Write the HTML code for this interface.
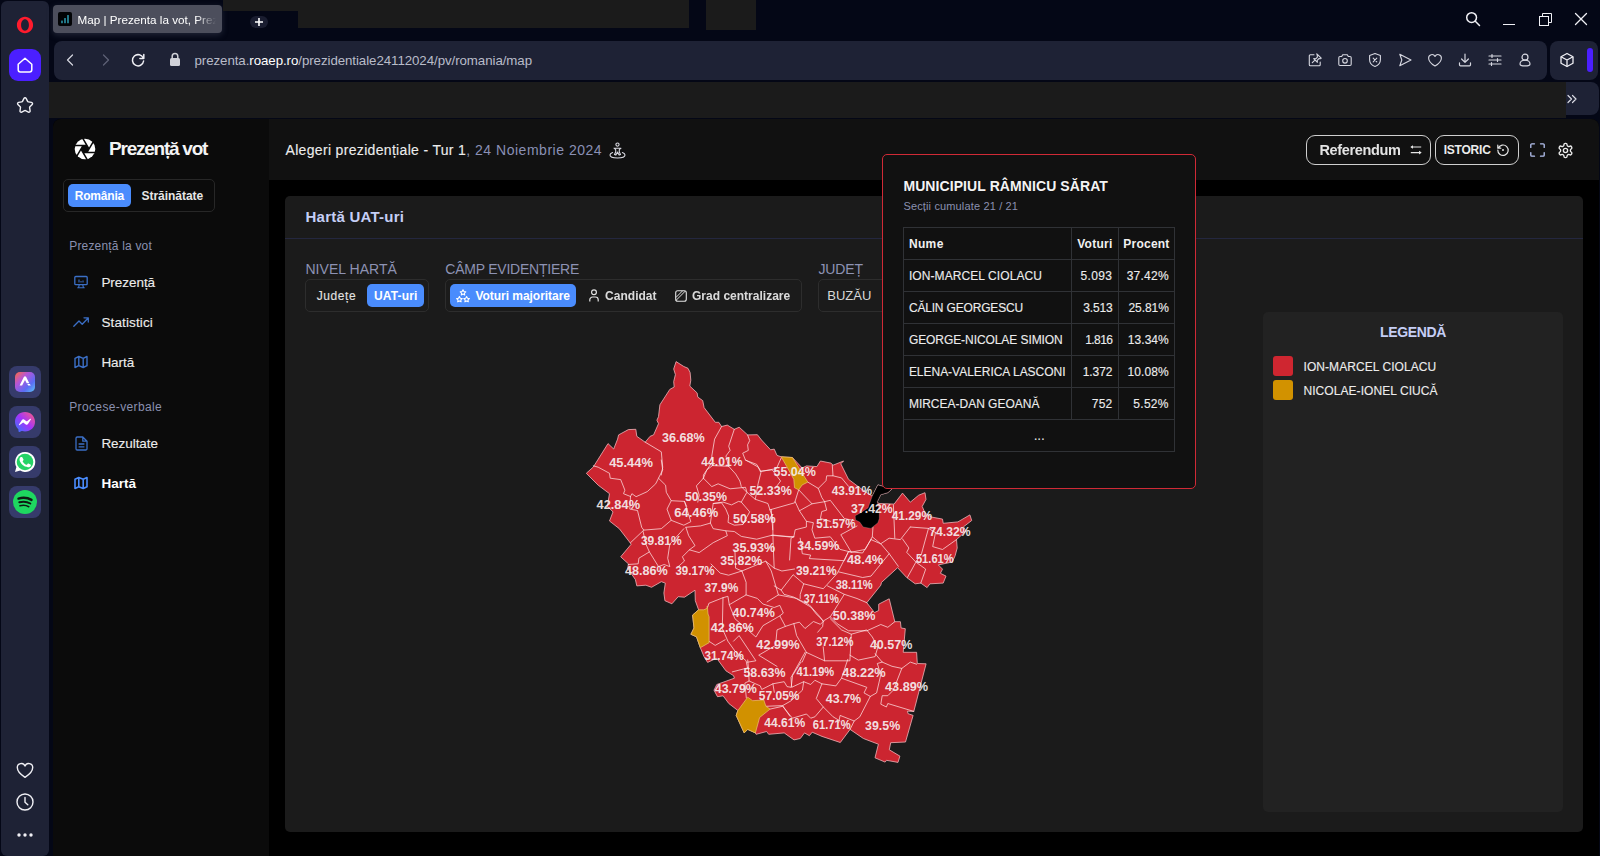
<!DOCTYPE html>
<html lang="ro">
<head>
<meta charset="utf-8">
<title>Map | Prezenta la vot</title>
<style>
*{box-sizing:border-box;margin:0;padding:0}
html,body{width:1600px;height:856px;overflow:hidden;background:#040716}
body{position:relative;font-family:"Liberation Sans",sans-serif;color:#e8e8e8;-webkit-font-smoothing:antialiased}
.abs{position:absolute}
.t{position:absolute;white-space:nowrap;line-height:1}
svg{position:absolute;overflow:visible}
/* browser chrome */
#osb{left:1px;top:1px;width:48px;height:855px;background:#1e2235;border-radius:6px}
#tab{left:53px;top:5px;width:169px;height:28px;background:#4c4e5c;border-radius:4px;box-shadow:0 2px 6px rgba(90,95,120,.35)}
.red{background:#1b1b1b}
#addr{left:54px;top:41px;width:1493px;height:39px;background:#1e2235;border-radius:8px}
#addr2{left:1550px;top:41px;width:48px;height:39px;background:#1e2235;border-radius:8px}
#bm{left:49px;top:82px;width:1550px;height:33px;background:#1e2235;border-radius:0 8px 8px 0}
.tile{left:9px;width:32px;height:32px;border-radius:8px;background:#363b6b}
/* page */
#page{left:53px;top:119px;width:1546px;height:737px;background:#000;border-radius:8px 8px 0 0;overflow:hidden}
#side{left:0;top:0;width:216px;height:737px;background:#0b0b0b}
#head{left:216px;top:0;width:1330px;height:61px;background:#111}
#panel{left:232px;top:77px;width:1298px;height:636px;background:#1b1b1b;border-radius:5px}
</style>
</head>
<body>
<!-- ===== Opera left sidebar ===== -->
<div class="abs" id="osb"></div>

<!-- opera sidebar icons -->
<svg style="left:16px;top:16px" width="18" height="18" viewBox="0 0 18 18"><path fill="#ff1b2d" fill-rule="evenodd" d="M9 .8C4.5.8.9 4.5.9 9s3.600 8.200 8.100 8.200S17.100 13.500 17.100 9 13.500.8 9 .8Zm0 2.500c-2.300 0-3.900 2.600-3.900 5.700s1.600 5.700 3.900 5.700 3.900-2.600 3.900-5.700S11.300 3.300 9 3.300Z"/><path fill="#1e2235" opacity=".0" d="M0 0"/></svg>
<div class="abs" style="left:9px;top:49px;width:32px;height:32px;border-radius:9px;background:#4b1fff"></div>
<svg style="left:16px;top:56px" width="18" height="18" viewBox="0 0 18 18" fill="none" stroke="#fff" stroke-width="1.5" stroke-linejoin="round"><path d="M2.200 8.300 9 2.200l6.800 6.100v5.400a2.200 2.200 0 0 1-2.200 2.200H4.400a2.200 2.200 0 0 1-2.200-2.200Z"/></svg>
<svg style="left:16px;top:96px" width="18" height="18" viewBox="0 0 18 18" fill="none" stroke="#f0f0f5" stroke-width="1.400" stroke-linejoin="round"><path d="M9 1.700c.5 0 .9.300 1.100.700l1.500 3c.1.300.4.500.7.500l3.200.5c1 .2 1.400 1.300.7 2l-2.300 2.300c-.2.200-.3.500-.3.800l.5 3.300c.2 1-.8 1.700-1.700 1.300l-2.900-1.500a1 1 0 0 0-.9 0l-2.900 1.500c-.9.400-1.900-.3-1.700-1.300l.5-3.300c0-.3-.1-.6-.3-.8L1.900 8.400c-.7-.7-.3-1.800.7-2l3.200-.5c.3 0 .6-.2.700-.5l1.500-3c.2-.4.600-.7 1-.7Z"/></svg>
<div class="abs tile" style="top:366px"></div>
<div class="abs tile" style="top:406px"></div>
<div class="abs tile" style="top:446px"></div>
<div class="abs tile" style="top:486px"></div>
<!-- aria tile -->
<svg style="left:15px;top:372px" width="20" height="20" viewBox="0 0 20 20"><defs><linearGradient id="ga" x1="0" y1="0" x2="1" y2="1"><stop offset="0" stop-color="#ff6a3d"/><stop offset=".35" stop-color="#b455d8"/><stop offset=".7" stop-color="#5b6cf5"/><stop offset="1" stop-color="#5cc6f5"/></linearGradient></defs><rect width="20" height="20" rx="5" fill="url(#ga)"/><path d="M9.100 4.600 4.600 13.600h2.500L10 7.900l1.700 3.300h2.600L10.900 4.600ZM12.300 11.900l.9 1.700h2.600l-.9-1.700Z" fill="#fff"/></svg>
<!-- messenger tile -->
<svg style="left:15px;top:412px" width="20" height="20" viewBox="0 0 20 20"><defs><linearGradient id="gm" x1="0" y1="1" x2="1" y2="0"><stop offset="0" stop-color="#2f7bff"/><stop offset=".5" stop-color="#a334fa"/><stop offset="1" stop-color="#ff5f7a"/></linearGradient></defs><path fill="url(#gm)" d="M10 0C4.400 0 0 4.100 0 9.700c0 2.900 1.200 5.400 3.100 7.200.2.100.3.400.3.600l.1 1.800c0 .6.600 1 1.100.7l2-.9c.2-.1.400-.1.500 0 .9.300 1.900.4 2.900.4 5.600 0 10-4.100 10-9.700S15.600 0 10 0Z"/><path fill="#fff" d="m4 12.500 2.900-4.600c.5-.8 1.500-.9 2.200-.4l2.300 1.700c.2.200.5.200.7 0l3.100-2.400c.4-.3 1 .2.700.6L13 12c-.5.800-1.500.9-2.200.4L8.500 10.700a.6.600 0 0 0-.7 0l-3.100 2.400c-.4.300-1-.2-.7-.6Z"/></svg>
<!-- whatsapp tile -->
<svg style="left:15px;top:452px" width="20" height="20" viewBox="0 0 20 20"><path fill="#fff" d="M10 0a10 10 0 0 0-8.600 15L0 20l5.200-1.400A10 10 0 1 0 10 0Z"/><circle cx="10" cy="10" r="8.300" fill="#25d366"/><path fill="#fff" d="M7.300 5.300c-.2-.4-.4-.4-.6-.4h-.5c-.2 0-.5.100-.7.300-.3.300-1 .9-1 2.300s1 2.700 1.100 2.900c.1.200 2 3.100 4.800 4.200 2.400.9 2.900.7 3.400.7s1.700-.7 1.900-1.300c.2-.7.200-1.200.2-1.300-.1-.1-.3-.2-.5-.3l-1.900-.9c-.300-.1-.5-.1-.6.100l-.9 1.100c-.2.200-.3.200-.6.100-.3-.2-1.200-.500-2.200-1.400-.8-.7-1.400-1.600-1.500-1.900-.2-.3 0-.4.100-.6l.4-.5c.2-.2.200-.3.300-.5.100-.2 0-.4 0-.5Z"/></svg>
<!-- spotify tile -->
<svg style="left:13px;top:490px" width="24" height="24" viewBox="0 0 24 24"><circle cx="12" cy="12" r="12" fill="#1ed760"/><g fill="none" stroke="#0e1a12" stroke-linecap="round"><path stroke-width="2.400" d="M5.500 8.600c4.300-1.300 9.200-.9 13 1.300"/><path stroke-width="2" d="M6.300 12.300c3.700-1.100 7.800-.7 11 1.200"/><path stroke-width="1.600" d="M7 15.700c3-.8 6.200-.6 8.800 1"/></g></svg>
<!-- bottom icons -->
<svg style="left:15.500px;top:762px" width="18" height="17" viewBox="0 0 18 17" fill="none" stroke="#f0f0f5" stroke-width="1.400" stroke-linejoin="round"><path d="M9 15.300S1.300 10.600 1.300 5.600A4 4 0 0 1 9 4a4 4 0 0 1 7.700 1.600c0 5-7.700 9.700-7.700 9.700Z"/></svg>
<svg style="left:15.500px;top:793px" width="18" height="18" viewBox="0 0 18 18" fill="none" stroke="#f0f0f5" stroke-width="1.400" stroke-linecap="round"><circle cx="9" cy="9" r="8"/><path d="M9 4.500V9.300l2.800 2.500"/></svg>
<svg style="left:14.500px;top:832px" width="20" height="6" viewBox="0 0 20 6" fill="#f0f0f5"><circle cx="4" cy="3" r="1.700"/><circle cx="10" cy="3" r="1.700"/><circle cx="16" cy="3" r="1.700"/></svg>
<!-- ===== tab strip ===== -->
<div class="abs" id="tab"></div>
<div class="abs red" style="left:223px;top:0;width:466px;height:11px"></div>
<div class="abs red" style="left:298px;top:0;width:391px;height:28px"></div>
<div class="abs red" style="left:706px;top:0;width:50px;height:30px"></div>

<!-- tab content -->
<div class="abs" style="left:58px;top:12px;width:14px;height:14px;background:#020305;border-radius:2px"></div>
<svg style="left:58px;top:12px" width="14" height="14" viewBox="0 0 14 14" fill="#2a95a8"><rect x="3.200" y="8.400" width="1.600" height="2.800" rx=".5"/><rect x="6.200" y="6" width="1.600" height="5.200" rx=".5"/><rect x="9.200" y="3" width="1.600" height="8.200" rx=".5"/></svg>
<div class="t" id="t_tab" style="left:77.500px;top:11.500px;width:140px;overflow:hidden;font-size:11.700px;letter-spacing:0;color:#fff;height:16px;line-height:15px;-webkit-mask-image:linear-gradient(90deg,#000 118px,transparent 138px);mask-image:linear-gradient(90deg,#000 118px,transparent 138px)">Map | Prezenta la vot, Prezenta</div>
<div class="abs" style="left:250px;top:16px;width:18px;height:12px;border-radius:6px;background:#1a1d30"></div>
<svg style="left:254px;top:17px" width="10" height="10" viewBox="0 0 10 10" stroke="#fff" stroke-width="1.600" fill="none"><path d="M5 1v8M1 5h8"/></svg>
<!-- window controls -->
<svg style="left:1465px;top:11px" width="16" height="16" viewBox="0 0 16 16" fill="none" stroke="#f0f0f5" stroke-width="1.500" stroke-linecap="round"><circle cx="6.600" cy="6.600" r="4.900"/><path d="m10.300 10.300 4.200 4.200"/></svg>
<div class="abs" style="left:1503px;top:24px;width:12px;height:1px;background:#f0f0f5"></div>
<svg style="left:1538.500px;top:12.500px" width="13" height="13" viewBox="0 0 13 13" fill="none" stroke="#f0f0f5" stroke-width="1"><path d="M3.500 3.500V.5h9v9h-3"/><rect x=".5" y="3.500" width="9" height="9"/></svg>
<svg style="left:1574px;top:12px" width="14" height="14" viewBox="0 0 14 14" fill="none" stroke="#f0f0f5" stroke-width="1.300" stroke-linecap="round"><path d="m1.500 1.500 11 11m0-11-11 11"/></svg>
<!-- ===== address bar ===== -->
<div class="abs" id="addr"></div>
<div class="abs" id="addr2"></div>
<div class="abs" id="bm"></div>
<div class="abs red" style="left:49px;top:82px;width:1517px;height:36px"></div>

<!-- nav icons -->
<svg style="left:63px;top:53px" width="14" height="14" viewBox="0 0 14 14" fill="none" stroke="#d6d7e0" stroke-width="1.200" stroke-linecap="round" stroke-linejoin="round"><path d="M9.500 2 4.500 7l5 5"/></svg>
<svg style="left:99px;top:53px" width="14" height="14" viewBox="0 0 14 14" fill="none" stroke="#5d6075" stroke-width="1.300" stroke-linecap="round" stroke-linejoin="round"><path d="m4.500 2 5 5-5 5"/></svg>
<svg style="left:130px;top:52px" width="16" height="16" viewBox="0 0 16 16" fill="none" stroke="#f0f0f5" stroke-width="1.500" stroke-linecap="round" stroke-linejoin="round"><path d="M13.300 6.300A5.600 5.600 0 1 0 13.600 9"/><path d="M13.800 2.600v3.900H9.900"/></svg>
<svg style="left:169px;top:52px" width="12" height="15" viewBox="0 0 12 15"><rect x="1" y="6" width="10" height="8" rx="1.500" fill="#d0d1d8"/><path d="M3.200 6.500V4.300a2.800 2.800 0 0 1 5.600 0v2.200" fill="none" stroke="#d0d1d8" stroke-width="1.500"/></svg>
<div class="t" id="t_url" style="left:194.500px;top:53px;font-size:13.300px;line-height:16px;color:#b9bcc9;letter-spacing:-.07px">prezenta.<span style="color:#fff">roaep.ro</span>/prezidentiale24112024/pv/romania/map</div>
<!-- address right icons -->

<svg style="left:1307px;top:52px" width="16" height="16" viewBox="0 0 16 16" fill="none" stroke="#d6d7e0" stroke-width="1.100" stroke-linejoin="round" stroke-linecap="round"><path d="M7 2.800H3.300a1 1 0 0 0-1 1v8.900a1 1 0 0 0 1 1h8.900a1 1 0 0 0 1-1V10"/><path d="m9.800 1.800 4.400 4.400-.9.500-1.400-.1-1.700 1.700.2 2-3.700-3.700 2 .2 1.700-1.700-.1-1.400ZM7.700 8.300 5.300 10.700"/></svg>
<svg style="left:1337px;top:52px" width="16" height="16" viewBox="0 0 16 16" fill="none" stroke="#d6d7e0" stroke-width="1.100" stroke-linejoin="round"><path d="M1.800 5.700a1.200 1.200 0 0 1 1.200-1.200h1.700l1-1.700h4.600l1 1.700H13a1.200 1.200 0 0 1 1.200 1.200v6.600a1.200 1.200 0 0 1-1.200 1.200H3a1.200 1.200 0 0 1-1.200-1.200Z"/><circle cx="8" cy="8.800" r="2.300"/></svg>
<svg style="left:1367px;top:52px" width="16" height="16" viewBox="0 0 16 16" fill="none" stroke="#d6d7e0" stroke-width="1.100" stroke-linejoin="round" stroke-linecap="round"><path d="M8 1.600 2.600 3.400v4.400c0 3.400 2.300 5.600 5.400 6.700 3.100-1.100 5.400-3.300 5.400-6.700V3.400Z"/><path d="m6.200 6.200 3.600 3.600m0-3.600L6.200 9.800"/></svg>
<svg style="left:1397px;top:52px" width="16" height="16" viewBox="0 0 16 16" fill="none" stroke="#d6d7e0" stroke-width="1.100" stroke-linejoin="round"><path d="M2.800 2.300 14 8 2.800 13.700 4.800 8Z"/></svg>
<svg style="left:1427px;top:52px" width="16" height="16" viewBox="0 0 16 16" fill="none" stroke="#d6d7e0" stroke-width="1.100" stroke-linejoin="round"><path d="M8 14S1.600 10.200 1.600 5.900A3.400 3.400 0 0 1 8 4.400a3.400 3.400 0 0 1 6.400 1.500C14.400 10.200 8 14 8 14Z"/></svg>
<svg style="left:1457px;top:52px" width="16" height="16" viewBox="0 0 16 16" fill="none" stroke="#d6d7e0" stroke-width="1.200" stroke-linejoin="round" stroke-linecap="round"><path d="M8 2v8.200M4.600 7 8 10.400 11.400 7M2.500 10.800v2a1 1 0 0 0 1 1h9a1 1 0 0 0 1-1v-2"/></svg>
<svg style="left:1487px;top:52px" width="16" height="16" viewBox="0 0 16 16" fill="none" stroke="#d6d7e0" stroke-width="1.200" stroke-linecap="round"><path d="M2 4h12M2 8h12M2 12h12M5 2.500v3M10.500 6.500v3M4.500 10.500v3"/></svg>
<svg style="left:1517px;top:52px" width="16" height="16" viewBox="0 0 16 16" fill="none" stroke="#d6d7e0" stroke-width="1.200"><circle cx="8" cy="5.200" r="3"/><path d="M8 8.200c-3 0-5 1.700-5 3.700 0 1.300 1.800 2 5 2s5-.7 5-2c0-2-2-3.700-5-3.700Z"/></svg>
<svg style="left:1559px;top:52px" width="16" height="16" viewBox="0 0 16 16" fill="none" stroke="#f0f0f5" stroke-width="1.300" stroke-linejoin="round"><path d="M8 1.500 14 4.800v6.400L8 14.500 2 11.200V4.800Z"/><path d="M2 4.800 8 8l6-3.200M8 8v6.500"/></svg>
<div class="abs" style="left:1587px;top:48px;width:6px;height:24px;border-radius:3px;background:#4b1fff"></div>
<svg style="left:1567px;top:93.500px" width="10" height="10" viewBox="0 0 10 10" fill="none" stroke="#d8d9e2" stroke-width="1.200" stroke-linecap="round" stroke-linejoin="round"><path d="m1 1.500 3.500 3.500L1 8.500M5.500 1.500 9 5 5.500 8.500"/></svg>
<!-- ===== page ===== -->
<div class="abs" id="page">
  <div class="abs" id="side"></div>
  <div class="abs" id="head"></div>
  <div class="abs" id="panel"></div>
</div>
<!-- app sidebar shapes -->
<svg style="left:73px;top:137px" width="24" height="24" viewBox="0 0 24 24"><circle cx="12" cy="12" r="10.300" fill="#fff"/><polygon points="16,12 14,15.460 10,15.460 8,12 10,8.540 14,8.540" fill="#0b0b0b"/><path d="M14 15.460L20.170 4.780M10 15.460L22.330 15.460M8 12L14.170 22.680M10 8.540L3.830 19.220M14 8.540L1.670 8.540M16 12L9.830 1.320" stroke="#0b0b0b" stroke-width="1.500" fill="none"/></svg>
<div class="abs" style="left:63px;top:179px;width:152px;height:33px;border:1px solid #272727;border-radius:5px"></div>
<div class="abs" style="left:68px;top:184px;width:63px;height:23px;border-radius:5px;background:#4a8cfd"></div>
<!-- nav icons -->
<svg style="left:74px;top:275px" width="14" height="14" viewBox="0 0 14 14" fill="none" stroke="#3b6fc6" stroke-width="1.300" stroke-linejoin="round"><rect x=".8" y="1.500" width="12.400" height="8.200" rx="1"/><path d="M3.300 12.800h7.400M5.200 9.900l-.6 2.800M8.800 9.900l.6 2.800M5 7.500V4.500M7 7.500V6M9 7.500V5.500" stroke-width="1.100"/></svg>
<svg style="left:73px;top:315px" width="16" height="14" viewBox="0 0 16 14" fill="none" stroke="#3b6fc6" stroke-width="1.300" stroke-linejoin="round" stroke-linecap="round"><path d="M.8 11.200 6 6l3.200 3.200 6-6.200M11 2.800h4.300v4.300"/></svg>
<svg style="left:74px;top:355px" width="14" height="14" viewBox="0 0 14 14" fill="none" stroke="#3b6fc6" stroke-width="1.400" stroke-linejoin="round"><path d="M1 3.300 4.800 1.500l4.400 1.800L13 1.500v9.200l-3.800 1.800-4.400-1.800L1 12.500ZM4.800 1.500v9.200M9.200 3.300v9.200"/></svg>
<svg style="left:75px;top:436px" width="13" height="15" viewBox="0 0 13 15" fill="none" stroke="#3b6fc6" stroke-width="1.300" stroke-linejoin="round"><path d="M1 2.200A1.200 1.200 0 0 1 2.200 1h5.600L12 5.200v7.600a1.200 1.200 0 0 1-1.200 1.200H2.200A1.200 1.200 0 0 1 1 12.800ZM7.800 1v4.200H12M3.600 8h5.800M3.600 10.800h5.800" /></svg>
<svg style="left:74px;top:476px" width="14" height="14" viewBox="0 0 14 14" fill="none" stroke="#4a8cfd" stroke-width="1.600" stroke-linejoin="round"><path d="M1 3.300 4.800 1.500l4.400 1.800L13 1.500v9.200l-3.800 1.800-4.400-1.800L1 12.500ZM4.800 1.500v9.200M9.200 3.300v9.200"/></svg>
<!-- header icons -->
<svg style="left:609px;top:142px" width="17" height="17" viewBox="0 0 17 17" fill="none" stroke="#d8d8e0" stroke-width="1.100" stroke-linejoin="round" stroke-linecap="round"><circle cx="8.500" cy="2.600" r="1.600"/><path d="M5 6.200h7l-1.700 1.500v2.200l1.200 2.600-1.400.6-1.600-3-1.600 3-1.400-.6 1.200-2.600V7.700Z"/><path d="M3.600 10.500C2 11.100 1 12 1 13c0 1.700 3.400 3 7.500 3s7.500-1.300 7.500-3c0-1-1-1.900-2.600-2.500"/></svg>
<div class="abs" style="left:1306px;top:135px;width:125px;height:30px;border:1px solid #cfcfcf;border-radius:9px"></div>
<div class="abs" style="left:1435px;top:135px;width:84px;height:30px;border:1px solid #cfcfcf;border-radius:9px"></div>
<svg style="left:1409.500px;top:144px" width="12" height="12" viewBox="0 0 12 12" fill="#e6e6e6" stroke="#e6e6e6" stroke-width="1.100"><path d="M1.500 3H11.200M10.500 8.600H.8" fill="none"/><path d="M.3 3 3 1.200V4.800ZM11.700 8.600 9 6.800v3.600Z" stroke="none"/></svg>
<svg style="left:1497px;top:144px" width="12" height="12" viewBox="0 0 12 12" fill="none" stroke="#e6e6e6" stroke-width="1.200" stroke-linecap="round" stroke-linejoin="round"><path d="M1.200 4.200A5.200 5.200 0 1 1 .8 6M.8 1.200v3h3"/><circle cx="6" cy="6" r="1" fill="#e6e6e6" stroke="none"/></svg>
<svg style="left:1530px;top:143px" width="15" height="14" viewBox="0 0 15 14" fill="none" stroke="#b6c3f2" stroke-width="1.300" stroke-linecap="round" stroke-linejoin="round"><path d="M.8 4.400V1.800a1 1 0 0 1 1-1h2.700M10.500.8h2.700a1 1 0 0 1 1 1v2.600M14.200 9.600v2.600a1 1 0 0 1-1 1h-2.700M4.500 13.200H1.800a1 1 0 0 1-1-1V9.600"/></svg>
<svg style="left:1556.500px;top:141.500px" width="17" height="17" viewBox="0 0 24 24" fill="none" stroke="#ececec" stroke-width="1.900" stroke-linecap="round" stroke-linejoin="round"><path d="M12.220 2h-.44a2 2 0 0 0-2 2v.18a2 2 0 0 1-1 1.730l-.43.250a2 2 0 0 1-2 0l-.15-.08a2 2 0 0 0-2.730.73l-.22.380a2 2 0 0 0 .73 2.730l.15.100a2 2 0 0 1 1 1.720v.51a2 2 0 0 1-1 1.740l-.15.090a2 2 0 0 0-.73 2.730l.22.380a2 2 0 0 0 2.730.73l.15-.08a2 2 0 0 1 2 0l.43.250a2 2 0 0 1 1 1.730V20a2 2 0 0 0 2 2h.44a2 2 0 0 0 2-2v-.18a2 2 0 0 1 1-1.730l.43-.250a2 2 0 0 1 2 0l.15.080a2 2 0 0 0 2.730-.73l.22-.39a2 2 0 0 0-.73-2.730l-.15-.08a2 2 0 0 1-1-1.740v-.5a2 2 0 0 1 1-1.740l.15-.09a2 2 0 0 0 .73-2.730l-.22-.38a2 2 0 0 0-2.730-.73l-.15.080a2 2 0 0 1-2 0l-.43-.250a2 2 0 0 1-1-1.730V4a2 2 0 0 0-2-2z"/><circle cx="12" cy="12" r="3"/></svg>
<!-- panel -->
<div class="abs" style="left:285px;top:238px;width:1298px;height:1px;background:#24273f"></div>
<div class="abs" style="left:305px;top:279px;width:124px;height:33px;border:1px solid #2d2d2d;border-radius:5px"></div>
<div class="abs" style="left:367px;top:284px;width:57px;height:23px;border-radius:5px;background:#4a8cfd"></div>
<div class="abs" style="left:445px;top:279px;width:357px;height:33px;border:1px solid #2d2d2d;border-radius:5px"></div>
<div class="abs" style="left:450px;top:284px;width:126px;height:23px;border-radius:5px;background:#4a8cfd"></div>
<div class="abs" style="left:818px;top:279px;width:200px;height:33px;border:1px solid #2d2d2d;border-radius:5px"></div>
<svg style="left:456px;top:289px" width="14" height="14" viewBox="0 0 14 14" fill="none" stroke="#fff" stroke-width="1.100" stroke-linejoin="round"><path d="m7 .8.900 1.700 1.900.3-1.400 1.300.3 1.900L7 5.100l-1.700.9.300-1.900L4.200 2.800l1.900-.3ZM3.400 7.600l.9 1.700 1.900.3-1.400 1.300.3 1.900-1.700-.9-1.700.9.300-1.900L.6 9.600l1.900-.3ZM10.600 7.600l.9 1.700 1.900.3-1.400 1.300.3 1.900-1.700-.9-1.700.9.300-1.900-1.400-1.300 1.900-.3Z"/></svg>
<svg style="left:589px;top:289px" width="10" height="13" viewBox="0 0 10 13" fill="none" stroke="#e2e2e2" stroke-width="1.200"><circle cx="5" cy="3.200" r="2.400"/><path d="M.8 12.400V10.800A2.800 2.800 0 0 1 3.600 8h2.800a2.800 2.800 0 0 1 2.800 2.800v1.600"/></svg>
<svg style="left:675px;top:290px" width="12" height="12" viewBox="0 0 12 12" fill="none" stroke="#e2e2e2" stroke-width="1.100" stroke-linejoin="round"><rect x=".7" y=".7" width="10.600" height="10.600" rx="2"/><path d="M.9 7.500 7.500.9M.9 10.500 10.500.9" stroke-width="1"/></svg>
<!-- legend -->
<div class="abs" style="left:1263px;top:312px;width:300px;height:500px;background:#222;border-radius:5px"></div>
<div class="abs" style="left:1273px;top:356px;width:20px;height:20px;border-radius:3px;background:#cf2630"></div>
<div class="abs" style="left:1273px;top:380px;width:20px;height:20px;border-radius:3px;background:#d29200"></div>

<div class="t" id="t_logo" style="left:109.1px;top:139.0px;font-size:19px;color:#f4f4f4;letter-spacing:-1.249px;font-weight:700">Prezență vot</div>
<div class="t" id="t_ro" style="left:74.8px;top:190.3px;font-size:12px;color:#ffffff;letter-spacing:-0.212px;font-weight:700">România</div>
<div class="t" id="t_str" style="left:141.5px;top:190.3px;font-size:12px;color:#e6e6e6;letter-spacing:-0.030px;font-weight:700">Străinătate</div>
<div class="t" id="t_s1" style="left:69.2px;top:239.7px;font-size:12px;color:#8a90b0;letter-spacing:0.184px">Prezență la vot</div>
<div class="t" id="t_n1" style="left:101.4px;top:275.7px;font-size:13.5px;color:#ececec;letter-spacing:-0.043px;-webkit-text-stroke:.12px #ececec">Prezență</div>
<div class="t" id="t_n2" style="left:101.4px;top:315.8px;font-size:13.5px;color:#ececec;letter-spacing:0.133px;-webkit-text-stroke:.12px #ececec">Statistici</div>
<div class="t" id="t_n3" style="left:101.4px;top:355.9px;font-size:13.5px;color:#ececec;letter-spacing:-0.023px;-webkit-text-stroke:.12px #ececec">Hartă</div>
<div class="t" id="t_s2" style="left:69.2px;top:400.8px;font-size:12px;color:#8a90b0;letter-spacing:0.368px">Procese-verbale</div>
<div class="t" id="t_n4" style="left:101.4px;top:436.7px;font-size:13.5px;color:#ececec;letter-spacing:-0.050px;-webkit-text-stroke:.12px #ececec">Rezultate</div>
<div class="t" id="t_n5" style="left:101.4px;top:476.5px;font-size:13.5px;color:#ffffff;letter-spacing:0.017px;font-weight:700">Hartă</div>
<div class="t" id="t_h1" style="left:285.5px;top:143.0px;font-size:14px;color:#ececec;letter-spacing:0.327px;-webkit-text-stroke:.12px #ececec">Alegeri prezidențiale - Tur 1</div>
<div class="t" id="t_h2" style="left:466.2px;top:143.0px;font-size:14px;color:#8a90b5;letter-spacing:0.522px">, 24 Noiembrie 2024</div>
<div class="t" id="t_pt" style="left:305.5px;top:209.3px;font-size:15px;color:#c5cef5;letter-spacing:0.240px;font-weight:700">Hartă UAT-uri</div>
<div class="t" id="t_l1" style="left:305.4px;top:262.2px;font-size:14px;color:#8d92b3;letter-spacing:0.052px">NIVEL HARTĂ</div>
<div class="t" id="t_l2" style="left:445.3px;top:262.2px;font-size:14px;color:#8d92b3;letter-spacing:-0.234px">CÂMP EVIDENȚIERE</div>
<div class="t" id="t_l3" style="left:818.5px;top:262.2px;font-size:14px;color:#8d92b3;letter-spacing:-0.165px">JUDEȚ</div>
<div class="t" id="t_b1" style="left:316.8px;top:290.1px;font-size:12px;color:#e2e2e2;letter-spacing:0.561px;-webkit-text-stroke:.12px #e2e2e2">Județe</div>
<div class="t" id="t_b2" style="left:373.9px;top:290.1px;font-size:12px;color:#ffffff;letter-spacing:0.178px;font-weight:700">UAT-uri</div>
<div class="t" id="t_b3" style="left:475.4px;top:290.1px;font-size:12px;color:#ffffff;letter-spacing:-0.032px;font-weight:700">Voturi majoritare</div>
<div class="t" id="t_b4" style="left:605.0px;top:290.1px;font-size:12px;color:#e2e2e2;letter-spacing:0.032px;font-weight:700;opacity:.96">Candidat</div>
<div class="t" id="t_b5" style="left:692.0px;top:290.1px;font-size:12px;color:#e2e2e2;letter-spacing:0.009px;font-weight:700;opacity:.96">Grad centralizare</div>
<div class="t" id="t_b6" style="left:827.3px;top:289.2px;font-size:13px;color:#d8d8d8;letter-spacing:0.008px">BUZĂU</div>
<div class="t" id="t_r1" style="left:1319.5px;top:142.9px;font-size:14.5px;color:#ececec;letter-spacing:-0.361px;font-weight:700;opacity:.96">Referendum</div>
<div class="t" id="t_r2" style="left:1443.7px;top:144.1px;font-size:12px;color:#ececec;letter-spacing:-0.222px;font-weight:700">ISTORIC</div>
<div class="t" id="t_lg" style="left:1380.0px;top:325.2px;font-size:14px;color:#c5cef5;letter-spacing:-0.365px;font-weight:700">LEGENDĂ</div>
<div class="t" id="t_lg1" style="left:1303.5px;top:360.6px;font-size:12px;color:#ececec;letter-spacing:0.062px;-webkit-text-stroke:.12px #ececec">ION-MARCEL CIOLACU</div>
<div class="t" id="t_lg2" style="left:1303.5px;top:384.7px;font-size:12px;color:#ececec;letter-spacing:0.062px;-webkit-text-stroke:.12px #ececec">NICOLAE-IONEL CIUCĂ</div>
<svg style="left:0;top:0" width="1600" height="856" viewBox="0 0 1600 856">
<polygon points="676.1,361.6 683.8,366.5 688.0,368.3 690.1,372.5 690.8,380.2 689.8,386.1 697.1,392.9 697.8,397.1 702.7,400.6 704.1,407.6 715.3,422.3 718.8,422.3 721.6,426.5 727.3,425.1 734.3,429.3 739.2,427.2 747.6,434.9 757.4,434.7 761.5,440.0 770.6,449.8 774.2,449.1 777.0,455.4 781.2,456.8 792.4,457.5 802.2,468.0 806.4,465.9 816.9,466.6 820.4,461.0 830.9,463.1 833.0,465.2 843.6,461.0 840.8,463.8 848.5,479.3 859.7,487.7 870.9,495.4 872.3,496.1 877.9,484.9 892.0,489.1 887.8,492.6 880.7,494.7 877.2,501.7 878.7,503.5 894.1,504.1 902.5,493.1 910.3,502.2 918.7,495.2 925.0,492.7 926.0,499.4 922.2,506.4 925.0,513.0 931.3,517.0 942.5,519.1 943.2,523.3 957.9,521.9 969.9,514.9 971.7,520.5 963.5,526.8 966.0,531.0 956.5,539.6 957.2,548.0 955.1,555.8 952.3,562.0 938.3,564.9 942.5,569.1 940.4,573.3 946.0,576.1 943.2,583.1 929.9,583.8 927.1,587.6 920.8,583.1 915.2,583.8 906.7,577.5 897.6,567.7 881.5,582.4 880.8,585.2 866.8,602.7 874.5,612.6 878.7,610.5 878.7,604.2 889.2,598.8 894.8,621.7 900.4,621.7 901.1,628.0 905.3,628.7 903.2,652.3 916.6,652.3 917.3,663.5 926.1,663.8 913.8,711.4 907.4,711.2 908.1,713.7 913.1,715.4 905.5,742.0 890.7,742.7 889.3,749.8 899.9,756.1 898.0,762.4 886.5,760.3 885.1,762.1 875.0,757.8 878.4,744.2 863.4,738.5 850.1,729.4 840.3,742.5 822.0,736.4 812.2,732.2 809.4,735.7 804.5,732.9 800.3,738.5 794.0,739.9 784.2,732.9 768.7,734.3 766.6,731.5 756.1,734.3 755.4,732.9 747.7,729.4 744.2,732.9 736.2,715.4 737.9,710.5 728.8,703.5 723.1,695.8 717.5,696.7 714.0,690.2 716.8,684.5 734.4,678.2 733.6,675.7 725.9,670.8 716.7,658.2 707.6,662.4 704.1,656.8 700.3,647.7 696.5,636.8 690.9,634.3 694.0,628.0 692.6,615.1 698.6,609.8 695.3,600.7 695.0,590.2 684.5,597.2 678.2,596.7 671.9,603.8 664.9,600.7 663.9,593.0 665.3,583.1 661.3,581.7 651.5,587.3 645.9,585.2 636.8,585.9 635.4,579.6 627.7,568.4 628.4,563.8 620.7,556.8 631.2,544.2 619.3,528.7 609.5,521.0 613.0,511.9 607.3,506.3 609.5,493.7 598.2,485.2 586.3,473.3 593.3,467.0 608.0,443.6 613.7,449.0 617.6,439.1 618.6,434.9 628.4,429.6 635.8,429.3 636.8,436.3 645.2,442.2 650.1,436.3 653.6,434.9 658.5,423.7 656.9,420.2 658.5,416.7 659.9,404.8 669.8,389.4 674.2,387.0 673.7,381.6 675.4,374.6 673.7,369.0" fill="#cc2530" stroke="#efb3b8" stroke-width=".8" stroke-linejoin="round"/>
<g fill="none" stroke="#ffe6e8" stroke-opacity=".72" stroke-width="1" stroke-linejoin="round" stroke-linecap="round">
<polyline points="645.2,442.2 661.3,451.8 662.7,467.2 661.3,475.0"/>
<polyline points="721.6,426.5 714.6,439.1 711.8,456.0 712.5,461.6 703.4,475.0 703.4,478.2"/>
<polyline points="734.3,429.3 728.7,446.2 730.1,450.4 725.9,456.0 727.3,461.6 728.7,466.3"/>
<polyline points="747.6,434.9 749.7,440.6 747.6,444.8 748.3,450.4 742.7,453.2 745.5,460.2 756.7,464.4 760.9,471.4"/>
<polyline points="760.9,471.4 776.4,468.6 781.2,458.0"/>
<polyline points="593.3,465.8 598.2,467.2 609.5,473.3 610.2,478.2 620.7,479.6 624.9,490.2 623.5,493.7 630.5,496.5 631.9,493.7 636.1,496.7 647.3,491.6 655.7,483.8 658.5,478.2 662.7,469.8 661.3,460.0"/>
<polyline points="658.5,478.2 665.6,485.2 666.3,492.3 671.2,500.7 684.5,501.4 686.6,506.3"/>
<polyline points="671.2,500.7 667.0,509.1 671.2,520.3 683.8,525.2 690.8,521.7 684.5,501.4"/>
<polyline points="630.5,496.5 629.8,509.1 637.5,510.5 641.7,527.3 643.8,530.1 661.3,528.7 671.2,520.3"/>
<polyline points="643.8,530.1 630.5,542.7"/>
<polyline points="643.1,531.5 645.9,544.2 649.4,551.9 638.9,558.2 638.2,563.8 628.4,564.5"/>
<polyline points="649.4,551.9 658.5,566.6 664.1,564.5 669.8,566.6 667.7,558.2 669.8,544.2 683.8,528.7"/>
<polyline points="685.9,527.3 688.7,535.7 695.0,545.6 689.4,549.8 682.4,556.8 684.5,561.0 678.2,566.6"/>
<polyline points="685.9,527.3 700.6,525.9 710.4,523.1 713.2,503.5 721.6,502.8 725.8,509.1 728.7,516.1 728.0,522.4 734.3,525.2 742.7,524.5 746.2,520.3"/>
<polyline points="710.4,523.1 713.2,528.7 725.8,530.8 727.3,535.7 713.2,542.7 699.2,552.6 689.4,549.8"/>
<polyline points="725.8,530.8 734.3,531.5 741.3,536.4 756.7,539.2 772.9,535.0 790.4,537.1 793.8,536.8"/>
<polyline points="770.0,509.8 772.9,518.9 772.9,535.0 773.4,550.0 774.2,568.2 781.9,571.0 794.5,569.0"/>
<polyline points="770.0,509.8 794.6,502.8 798.7,489.8"/>
<polyline points="703.4,478.2 696.4,485.9 699.2,495.1 697.8,502.1"/>
<polyline points="703.4,478.2 706.9,469.8 712.5,465.6 728.7,466.3"/>
<polyline points="703.4,478.2 711.8,486.6 718.1,483.8 730.1,488.8 745.5,487.3 746.9,492.3 741.3,502.1 738.5,501.4 731.5,504.9 723.1,502.1 713.2,503.5"/>
<polyline points="728.7,466.3 735.7,474.0 739.9,481.0 741.3,486.6 746.9,492.3 755.3,499.3 767.9,503.5 770.0,509.8"/>
<polyline points="741.3,502.1 749.7,511.9 742.7,524.5"/>
<polyline points="745.5,460.0 758.1,467.0 760.9,472.6 758.1,483.8 755.3,499.3"/>
<polyline points="760.9,471.2 772.2,469.8 780.6,481.0 776.4,486.6"/>
<polyline points="795.2,501.7 799.4,510.8 806.4,521.3 806.4,527.0 795.2,529.8 793.8,536.8 791.0,538.2 789.6,560.0"/>
<polyline points="799.4,510.8 812.0,503.8 824.6,501.7 826.7,510.1 821.8,511.5 820.4,518.5 830.3,521.3"/>
<polyline points="798.7,489.8 812.0,503.8"/>
<polyline points="807.8,482.1 818.3,488.4 826.0,480.7 826.7,475.8 833.0,475.8 832.3,465.2"/>
<polyline points="818.3,488.4 821.8,497.5 824.6,501.7"/>
<polyline points="833.0,475.8 841.5,477.9 848.5,486.3"/>
<polyline points="824.6,501.7 830.3,500.3 844.3,518.5 854.1,520.6"/>
<polyline points="806.4,521.3 813.4,522.7 812.0,529.8 814.8,538.2 830.3,536.8 840.1,549.4 851.3,552.2"/>
<polyline points="857.0,526.0 840.8,534.7 851.3,552.2 865.3,549.4 872.3,536.8 873.0,527.0"/>
<polyline points="872.3,536.8 880.7,543.8 889.1,538.2 900.4,539.6 910.3,527.0"/>
<polyline points="893.4,505.0 894.8,538.2"/>
<polyline points="771.3,509.4 772.7,529.8"/>
<polyline points="793.8,536.8 771.3,535.4"/>
<polyline points="871.0,539.6 880.8,543.8 889.2,553.7 871.0,576.1 862.6,577.5 838.7,571.9"/>
<polyline points="871.0,539.6 862.6,553.0 848.5,551.6 844.3,560.7 809.3,558.6 810.7,555.1 802.3,553.7 800.2,538.2"/>
<polyline points="848.5,551.6 837.3,573.3 823.3,588.7 803.7,583.8 800.2,594.3 800.2,598.5"/>
<polyline points="827.5,585.9 844.3,594.3 857.0,598.5 866.8,602.7"/>
<polyline points="844.3,594.3 830.3,616.8 823.3,621.0 822.6,626.6 817.7,632.2"/>
<polyline points="830.3,616.8 837.3,623.8 848.5,630.8 866.8,630.8 880.8,624.5 887.8,627.3 894.8,621.7"/>
<polyline points="889.2,553.7 898.3,566.3"/>
<polyline points="910.3,527.0 928.5,528.4 935.5,532.6"/>
<polyline points="928.5,528.4 921.5,553.7 915.9,562.1 907.4,577.5"/>
<polyline points="902.5,538.9 908.9,548.0 906.7,552.3 915.9,562.1 925.7,569.1 920.8,583.1"/>
<polyline points="935.5,532.6 932.7,546.6 942.5,549.5 956.5,539.6"/>
<polyline points="803.7,583.8 793.1,574.7 781.2,590.1 774.2,585.9"/>
<polyline points="781.2,590.1 784.0,594.3 793.8,597.1 810.7,607.0 816.3,614.0 823.3,621.0"/>
<polyline points="741.9,571.0 746.1,582.3 746.1,594.9 729.3,604.7 727.9,596.3 723.0,597.7 708.9,603.3 707.5,607.5"/>
<polyline points="746.1,594.9 757.3,598.4 762.9,604.0 774.2,607.5 779.8,605.4 783.3,613.1 779.8,615.9 785.4,626.4 793.8,623.6 799.4,622.2 805.0,628.5 813.4,621.5 820.4,624.3 823.2,621.5"/>
<polyline points="767.1,601.9 778.4,594.9 796.6,598.4 809.2,604.7 820.4,617.3 823.2,621.5"/>
<polyline points="778.4,594.9 771.3,571.0 765.7,561.2"/>
<polyline points="729.3,604.7 734.9,618.7 755.9,637.0 762.9,625.7 779.8,615.9"/>
<polyline points="723.0,597.7 722.3,628.5 727.9,641.2 734.9,651.0 746.1,660.8 747.5,667.7"/>
<polyline points="733.5,641.2 739.1,635.6 755.9,660.8 747.5,662.2"/>
<polyline points="785.4,626.4 777.0,629.9 775.6,645.4 758.7,655.2 777.0,666.4"/>
<polyline points="793.8,623.6 796.6,635.6 806.4,652.4 802.2,662.0"/>
<polyline points="806.4,652.4 824.6,660.8 849.9,660.8 851.3,634.2 841.5,629.9 830.3,618.7"/>
<polyline points="823.2,646.8 824.6,660.8"/>
<polyline points="851.3,634.2 866.7,629.9 872.3,637.0 877.9,646.8 875.1,656.6 858.3,660.1 849.9,655.2"/>
<polyline points="708.9,641.2 715.2,645.4 725.1,639.8"/>
<polyline points="711.0,564.0 720.2,573.1 728.6,575.2 741.9,571.0"/>
<polyline points="741.9,571.0 765.7,561.2 774.2,568.2"/>
<polyline points="734.9,550.0 735.6,568.2 741.9,571.0"/>
<polyline points="875.2,653.7 882.2,662.1 892.0,666.3 901.8,668.4 910.3,662.1 916.6,664.2"/>
<polyline points="901.8,668.4 893.4,690.1 887.8,695.7 882.2,695.7 880.8,704.2 886.4,707.0 887.8,703.5 913.8,711.4"/>
<polyline points="882.2,662.1 877.3,663.5 880.8,674.7 876.6,692.9 870.3,696.4 864.0,692.9 866.8,687.3 841.5,678.2"/>
<polyline points="847.8,659.3 841.5,678.2 835.9,685.9 821.9,683.8 816.3,698.5 823.3,707.0 833.1,716.8 840.1,721.0"/>
<polyline points="805.1,652.3 791.0,677.5 791.7,687.3 803.7,681.7 810.7,684.5 814.9,680.3 821.9,683.8"/>
<polyline points="870.3,696.4 859.8,716.8 854.2,721.0 840.1,715.4 838.7,722.4"/>
<polyline points="823.3,707.0 814.9,716.8 810.7,718.2 806.5,714.0 792.4,718.2 782.6,706.3 770.1,709.1"/>
<polyline points="854.2,721.0 850.1,729.4"/>
<polyline points="732.3,671.9 748.4,667.7 747.7,660.0"/>
<polyline points="748.4,667.7 749.1,681.0 744.9,683.1 746.3,697.9"/>
<polyline points="749.1,681.0 760.3,685.9 761.7,689.5 772.9,683.8 784.2,681.7 787.0,686.6 791.2,687.3 792.6,675.4 801.0,662.0"/>
<polyline points="772.9,683.8 774.3,692.3"/>
<polyline points="765.9,706.3 782.7,705.6 791.2,700.7 802.4,690.2 803.7,681.7"/>
<polyline points="782.7,705.6 789.8,716.1"/>
</g>
<polygon points="781.2,456.8 792.4,457.5 807.8,482.1 802.2,484.9 798.7,489.8 794.5,487.7 793.8,479.3 786.8,466.6" fill="#d19100" stroke="#e9c46f" stroke-width=".7"/>
<polygon points="755.4,732.9 747.7,729.4 744.2,732.9 736.2,715.4 737.9,710.5 747.7,697.2 752.6,700.7 763.8,700.0 765.9,706.3 770.1,709.1 759.6,717.5" fill="#d19100" stroke="#e9c46f" stroke-width=".7"/>
<polygon points="700.3,647.7 709.1,642.7 709.1,616.8 708.0,614.0 707.3,606.0 707.0,608.4 703.8,609.8 698.6,609.8 692.6,615.1 694.0,628.0 690.9,634.3 696.5,636.8" fill="#d19100" stroke="#e9c46f" stroke-width=".7"/>
<polygon points="872.3,496.1 877.9,484.9 892.0,489.1 887.8,492.6 880.7,494.7 877.2,501.7 879.3,510.1 879.3,518.5 877.9,522.7 870.9,528.4 863.2,527.0 859.7,522.0 855.5,519.9 855.2,515.7 860.4,512.9 868.0,508.0" fill="#000" stroke="#e8e8e8" stroke-opacity=".35" stroke-width=".6"/>
<g font-family="'Liberation Sans',sans-serif" font-size="12.500" font-weight="700" fill="#f6f0f0" fill-opacity=".93" text-anchor="middle">
<text class="m" x="683.4" y="442.1" textLength="42.8" lengthAdjust="spacingAndGlyphs">36.68%</text>
<text class="m" x="631.0" y="467.0" textLength="43.7" lengthAdjust="spacingAndGlyphs">45.44%</text>
<text class="m" x="721.9" y="466.0" textLength="41.1" lengthAdjust="spacingAndGlyphs">44.01%</text>
<text class="m" x="618.3" y="508.8" textLength="43.5" lengthAdjust="spacingAndGlyphs">42.84%</text>
<text class="m" x="706.0" y="501.0" textLength="42.1" lengthAdjust="spacingAndGlyphs">50.35%</text>
<text class="m" x="696.2" y="516.8" textLength="43.9" lengthAdjust="spacingAndGlyphs">64.46%</text>
<text class="m" x="770.6" y="494.8" textLength="42.4" lengthAdjust="spacingAndGlyphs">52.33%</text>
<text class="m" x="754.3" y="522.9" textLength="42.8" lengthAdjust="spacingAndGlyphs">50.58%</text>
<text class="m" x="661.3" y="544.9" textLength="40.7" lengthAdjust="spacingAndGlyphs">39.81%</text>
<text class="m" x="753.9" y="551.9" textLength="42.6" lengthAdjust="spacingAndGlyphs">35.93%</text>
<text class="m" x="741.3" y="565.1" textLength="42.0" lengthAdjust="spacingAndGlyphs">35.82%</text>
<text class="m" x="646.3" y="574.9" textLength="42.8" lengthAdjust="spacingAndGlyphs">48.86%</text>
<text class="m" x="695.0" y="574.9" textLength="39.2" lengthAdjust="spacingAndGlyphs">39.17%</text>
<text class="m" x="794.7" y="476.2" textLength="42.4" lengthAdjust="spacingAndGlyphs">55.04%</text>
<text class="m" x="851.9" y="495.3" textLength="40.3" lengthAdjust="spacingAndGlyphs">43.91%</text>
<text class="m" x="871.9" y="512.8" textLength="41.7" lengthAdjust="spacingAndGlyphs">37.42%</text>
<text class="m" x="835.9" y="527.7" textLength="39.3" lengthAdjust="spacingAndGlyphs">51.57%</text>
<text class="m" x="818.3" y="550.1" textLength="42.1" lengthAdjust="spacingAndGlyphs">34.59%</text>
<text class="m" x="911.9" y="519.7" textLength="40.3" lengthAdjust="spacingAndGlyphs">41.29%</text>
<text class="m" x="949.9" y="535.8" textLength="41.4" lengthAdjust="spacingAndGlyphs">74.32%</text>
<text class="m" x="865.1" y="563.7" textLength="36.4" lengthAdjust="spacingAndGlyphs">48.4%</text>
<text class="m" x="934.8" y="562.8" textLength="37.8" lengthAdjust="spacingAndGlyphs">51.61%</text>
<text class="m" x="816.3" y="574.7" textLength="40.7" lengthAdjust="spacingAndGlyphs">39.21%</text>
<text class="m" x="854.2" y="588.8" textLength="37.1" lengthAdjust="spacingAndGlyphs">38.11%</text>
<text class="m" x="821.3" y="602.8" textLength="35.3" lengthAdjust="spacingAndGlyphs">37.11%</text>
<text class="m" x="854.2" y="619.8" textLength="42.7" lengthAdjust="spacingAndGlyphs">50.38%</text>
<text class="m" x="721.4" y="592.0" textLength="34.0" lengthAdjust="spacingAndGlyphs">37.9%</text>
<text class="m" x="753.7" y="616.7" textLength="42.4" lengthAdjust="spacingAndGlyphs">40.74%</text>
<text class="m" x="732.3" y="632.1" textLength="43.0" lengthAdjust="spacingAndGlyphs">42.86%</text>
<text class="m" x="778.0" y="648.5" textLength="43.5" lengthAdjust="spacingAndGlyphs">42.99%</text>
<text class="m" x="834.8" y="646.1" textLength="37.2" lengthAdjust="spacingAndGlyphs">37.12%</text>
<text class="m" x="891.1" y="648.8" textLength="42.4" lengthAdjust="spacingAndGlyphs">40.57%</text>
<text class="m" x="724.2" y="659.7" textLength="39.6" lengthAdjust="spacingAndGlyphs">31.74%</text>
<text class="m" x="815.4" y="676.0" textLength="37.6" lengthAdjust="spacingAndGlyphs">41.19%</text>
<text class="m" x="864.0" y="676.8" textLength="43.5" lengthAdjust="spacingAndGlyphs">48.22%</text>
<text class="m" x="906.6" y="690.9" textLength="43.2" lengthAdjust="spacingAndGlyphs">43.89%</text>
<text class="m" x="843.5" y="702.8" textLength="35.4" lengthAdjust="spacingAndGlyphs">43.7%</text>
<text class="m" x="831.7" y="728.7" textLength="37.8" lengthAdjust="spacingAndGlyphs">61.71%</text>
<text class="m" x="882.6" y="729.7" textLength="35.1" lengthAdjust="spacingAndGlyphs">39.5%</text>
<text class="m" x="764.5" y="676.9" textLength="42.1" lengthAdjust="spacingAndGlyphs">58.63%</text>
<text class="m" x="735.8" y="693.0" textLength="42.1" lengthAdjust="spacingAndGlyphs">43.79%</text>
<text class="m" x="779.2" y="700.0" textLength="40.7" lengthAdjust="spacingAndGlyphs">57.05%</text>
<text class="m" x="784.7" y="726.7" textLength="41.0" lengthAdjust="spacingAndGlyphs">44.61%</text>
</g></svg>
<!-- tooltip -->
<div class="abs" style="left:882px;top:154px;width:314px;height:335px;background:#111;border:1px solid #d02a36;border-radius:5px"></div>
<div class="abs" style="left:903px;top:227px;width:272px;height:225px;border:1px solid #303236"></div>
<div class="abs" style="left:1071px;top:227px;width:1px;height:192px;background:#303236"></div>
<div class="abs" style="left:1118px;top:227px;width:1px;height:192px;background:#303236"></div>
<div class="abs" style="left:903px;top:259px;width:272px;height:1px;background:#303236"></div>
<div class="abs" style="left:903px;top:291px;width:272px;height:1px;background:#303236"></div>
<div class="abs" style="left:903px;top:323px;width:272px;height:1px;background:#303236"></div>
<div class="abs" style="left:903px;top:355px;width:272px;height:1px;background:#303236"></div>
<div class="abs" style="left:903px;top:387px;width:272px;height:1px;background:#303236"></div>
<div class="abs" style="left:903px;top:419px;width:272px;height:1px;background:#303236"></div>

<div class="t" id="t_tt" style="left:903.4px;top:179.1px;font-size:14px;color:#f4f4f4;letter-spacing:0.088px;font-weight:700">MUNICIPIUL RÂMNICU SĂRAT</div>
<div class="t" id="t_ts" style="left:903.4px;top:200.5px;font-size:11px;color:#8a90b0;letter-spacing:0.148px">Secții cumulate 21 / 21</div>
<div class="t" id="t_th1" style="left:908.9px;top:237.9px;font-size:12px;color:#f0f0f0;letter-spacing:0.364px;font-weight:700">Nume</div>
<div class="t" id="t_th2" style="left:1077.2px;top:237.9px;font-size:12px;color:#f0f0f0;letter-spacing:0.286px;font-weight:700">Voturi</div>
<div class="t" id="t_th3" style="left:1123.3px;top:237.9px;font-size:12px;color:#f0f0f0;letter-spacing:0.230px;font-weight:700">Procent</div>
<div class="t" id="t_tr0n" style="left:908.9px;top:269.7px;font-size:12px;color:#ececec;letter-spacing:0.090px;-webkit-text-stroke:.12px #ececec">ION-MARCEL CIOLACU</div>
<div class="t" id="t_tr0v" style="left:1080.6px;top:269.7px;font-size:12px;color:#ececec;letter-spacing:0.354px;-webkit-text-stroke:.12px #ececec">5.093</div>
<div class="t" id="t_tr0p" style="left:1126.7px;top:269.7px;font-size:12px;color:#ececec;letter-spacing:0.233px;-webkit-text-stroke:.12px #ececec">37.42%</div>
<div class="t" id="t_tr1n" style="left:908.9px;top:301.7px;font-size:12px;color:#ececec;letter-spacing:-0.174px;-webkit-text-stroke:.12px #ececec">CĂLIN GEORGESCU</div>
<div class="t" id="t_tr1v" style="left:1083.3px;top:301.7px;font-size:12px;color:#ececec;letter-spacing:-0.186px;-webkit-text-stroke:.12px #ececec">3.513</div>
<div class="t" id="t_tr1p" style="left:1128.4px;top:301.7px;font-size:12px;color:#ececec;letter-spacing:-0.051px;-webkit-text-stroke:.12px #ececec">25.81%</div>
<div class="t" id="t_tr2n" style="left:908.9px;top:333.7px;font-size:12px;color:#ececec;letter-spacing:-0.074px;-webkit-text-stroke:.12px #ececec">GEORGE-NICOLAE SIMION</div>
<div class="t" id="t_tr2v" style="left:1085.2px;top:333.7px;font-size:12px;color:#ececec;letter-spacing:-0.566px;-webkit-text-stroke:.12px #ececec">1.816</div>
<div class="t" id="t_tr2p" style="left:1127.8px;top:333.7px;font-size:12px;color:#ececec;letter-spacing:0.049px;-webkit-text-stroke:.12px #ececec">13.34%</div>
<div class="t" id="t_tr3n" style="left:908.9px;top:365.7px;font-size:12px;color:#ececec;letter-spacing:-0.026px;-webkit-text-stroke:.12px #ececec">ELENA-VALERICA LASCONI</div>
<div class="t" id="t_tr3v" style="left:1082.7px;top:365.7px;font-size:12px;color:#ececec;letter-spacing:-0.066px;-webkit-text-stroke:.12px #ececec">1.372</div>
<div class="t" id="t_tr3p" style="left:1127.4px;top:365.7px;font-size:12px;color:#ececec;letter-spacing:0.116px;-webkit-text-stroke:.12px #ececec">10.08%</div>
<div class="t" id="t_tr4n" style="left:908.9px;top:397.7px;font-size:12px;color:#ececec;letter-spacing:-0.011px;-webkit-text-stroke:.12px #ececec">MIRCEA-DAN GEOANĂ</div>
<div class="t" id="t_tr4v" style="left:1091.8px;top:397.7px;font-size:12px;color:#ececec;letter-spacing:0.190px;-webkit-text-stroke:.12px #ececec">752</div>
<div class="t" id="t_tr4p" style="left:1133.3px;top:397.7px;font-size:12px;color:#ececec;letter-spacing:0.294px;-webkit-text-stroke:.12px #ececec">5.52%</div>
<div class="t" id="t_tdots" style="left:1033.9px;top:430.1px;font-size:12px;color:#ececec;letter-spacing:0.350px;-webkit-text-stroke:.12px #ececec">...</div>
</body>
</html>
